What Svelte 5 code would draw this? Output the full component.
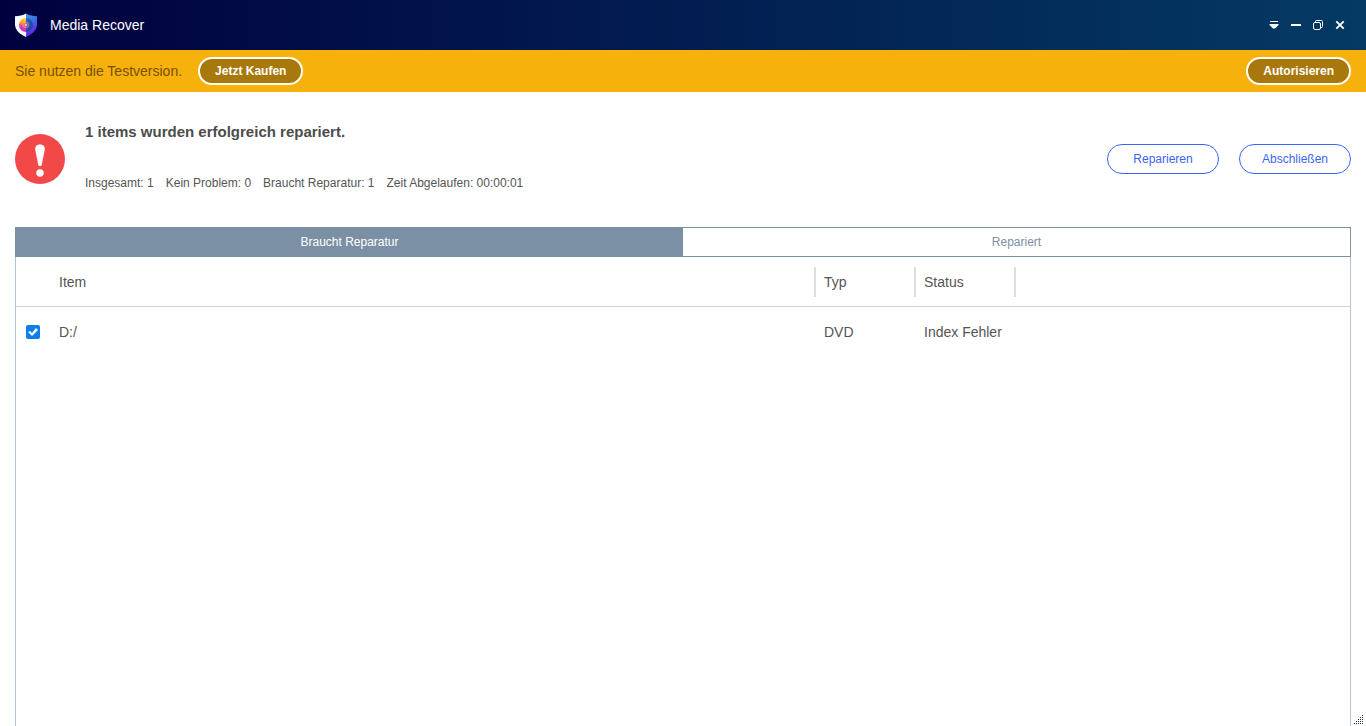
<script>
  let activeTab = $state('broken');
  let checked = $state(true);

  const tabs = [
    { id: 'broken', label: 'Braucht Reparatur' },
    { id: 'fixed', label: 'Repariert' }
  ];

  const stats = [
    { label: 'Insgesamt', value: '1' },
    { label: 'Kein Problem', value: '0' },
    { label: 'Braucht Reparatur', value: '1' },
    { label: 'Zeit Abgelaufen', value: '00:00:01' }
  ];
</script>

<div class="window">
  <header class="titlebar">
    <svg class="logo" viewBox="0 0 24 24" aria-hidden="true">
      <defs>
        <linearGradient id="shield-right" x1="0" y1="0" x2="0.3" y2="1">
          <stop offset="0" stop-color="#3c9bea" />
          <stop offset="0.55" stop-color="#3d63e6" />
          <stop offset="1" stop-color="#7417ea" />
        </linearGradient>
        <linearGradient id="disc-left" x1="0.7" y1="0" x2="0.4" y2="1">
          <stop offset="0" stop-color="#ffd21f" />
          <stop offset="0.4" stop-color="#ff9a24" />
          <stop offset="0.65" stop-color="#f0389c" />
          <stop offset="1" stop-color="#a52be8" />
        </linearGradient>
        <linearGradient id="disc-right" x1="0" y1="0" x2="1" y2="1">
          <stop offset="0" stop-color="#2c62b4" />
          <stop offset="1" stop-color="#1c3488" />
        </linearGradient>
      </defs>
      <path d="M12 0.5C9 2.400 5 3.100 1 3.200V11c0 6 4.500 10 11 13z" fill="#f4fbff" />
      <path d="M12 0.5c3 1.900 7 2.600 11 2.700V11c0 6-4.500 10-11 13z" fill="url(#shield-right)" />
      <path d="M12 5a7 7 0 0 0 0 14z" fill="url(#disc-left)" />
      <path d="M12 5a7 7 0 0 1 0 14z" fill="url(#disc-right)" opacity="0.85" />
      <circle cx="12" cy="12" r="2.800" fill="#c45cc4" fill-opacity="0.500" stroke="#d9a6dc" stroke-opacity="0.600" stroke-width="0.800" />
      <circle cx="12" cy="12" r="1" fill="#e6d4fa" />
    </svg>
    <span class="app-name">Media Recover</span>
    <div class="controls">
      <button type="button" aria-label="Menü">
        <svg viewBox="0 0 12 12"><path d="M2 2h8v1H2zM1.500 5h9v1L7 9.500H5L1.500 6z" fill="#fff" /></svg>
      </button>
      <button type="button" aria-label="Minimieren">
        <svg viewBox="0 0 12 12"><path d="M1 5h10v2H1z" fill="#fff" /></svg>
      </button>
      <button type="button" aria-label="Wiederherstellen">
        <svg viewBox="0 0 12 12" fill="none" stroke="#fff">
          <rect x="1.500" y="3.500" width="7" height="7" rx="1.500" />
          <path d="M3.500 3V2.500a1 1 0 0 1 1-1h5a1 1 0 0 1 1 1v5a1 1 0 0 1-1 1H9" />
        </svg>
      </button>
      <button type="button" aria-label="Schließen">
        <svg viewBox="0 0 12 12"><path d="M2.300 2.300l7.400 7.400M9.700 2.300L2.300 9.700" stroke="#fff" stroke-width="1.800" /></svg>
      </button>
    </div>
  </header>

  <div class="trial">
    <span>Sie nutzen die Testversion.</span>
    <button type="button">Jetzt Kaufen</button>
    <button type="button" class="authorize">Autorisieren</button>
  </div>

  <main>
    <section class="summary">
      <svg class="alert" viewBox="0 0 50 50" aria-hidden="true">
        <circle cx="25" cy="25" r="25" fill="#f24848" />
        <path d="M20.200 15.500C19.800 12.300 22 10.500 25 10.500s5.200 1.800 4.800 5L26.700 31c-.4 1.600-3 1.600-3.400 0z" fill="#fff" />
        <circle cx="25" cy="39" r="3.700" fill="#fff" />
      </svg>
      <div class="report">
        <h1>1 items wurden erfolgreich repariert.</h1>
        <div class="stats">
          {#each stats as stat}
            <span>{stat.label}: {stat.value}</span>
          {/each}
        </div>
      </div>
      <div class="actions">
        <button type="button">Reparieren</button>
        <button type="button">Abschließen</button>
      </div>
    </section>

    <div class="tabs" role="tablist">
      {#each tabs as tab}
        <button
          type="button"
          role="tab"
          class:active={activeTab === tab.id}
          aria-selected={activeTab === tab.id}
          onclick={() => (activeTab = tab.id)}>{tab.label}</button>
      {/each}
    </div>

    <div class="list">
      <table>
        <colgroup>
          <col class="c-check" />
          <col class="c-item" />
          <col class="c-small" />
          <col class="c-small" />
          <col class="c-rest" />
        </colgroup>
        <thead>
          <tr>
            <td></td>
            <th scope="col"><span>Item</span></th>
            <th scope="col"><span>Typ</span></th>
            <th scope="col"><span>Status</span></th>
            <td></td>
          </tr>
        </thead>
        <tbody>
          <tr>
            <td class="check"><input type="checkbox" id="row-d" bind:checked /></td>
            <td><label for="row-d">D:/</label></td>
            <td>DVD</td>
            <td>Index Fehler</td>
            <td></td>
          </tr>
        </tbody>
      </table>
    </div>
  </main>

  <svg class="grip" viewBox="0 0 10 10" aria-hidden="true">
    <path
      d="M8 0h1v1H8zM6 2h1v1H6zM8 2h1v1H8zM4 4h1v1H4zM6 4h1v1H6zM8 4h1v1H8zM2 6h1v1H2zM4 6h1v1H4zM6 6h1v1H6zM8 6h1v1H8zM0 8h1v1H0zM2 8h1v1H2zM4 8h1v1H4zM6 8h1v1H6zM8 8h1v1H8z"
      fill="#1c2c4c" />
  </svg>
</div>

<style>
  :global(body) {
    margin: 0;
    background: #fff;
  }

  .window {
    position: relative;
    display: flex;
    flex-direction: column;
    min-height: 100vh;
    box-sizing: border-box;
    font-family: 'Liberation Sans', Arial, sans-serif;
    font-size: 14px;
    line-height: 20px;
    color: #555;
  }

  button {
    box-sizing: border-box;
    margin: 0;
    padding: 0;
    font: inherit;
    cursor: pointer;
  }

  .titlebar {
    display: flex;
    align-items: center;
    height: 50px;
    padding: 0 20px 0 14px;
    background: linear-gradient(90deg, #00003f, #043a63);
    color: #fff;
  }

  .logo {
    width: 24px;
    height: 24px;
    margin-right: 12px;
  }

  .controls {
    display: flex;
    gap: 10px;
    margin-left: auto;
  }

  .controls button {
    display: flex;
    border: 0;
    background: none;
  }

  .controls svg {
    width: 12px;
    height: 12px;
  }

  .trial {
    display: flex;
    align-items: center;
    gap: 16px;
    height: 42px;
    padding: 0 15px;
    background: #f7b10c;
    color: #765000;
  }

  .trial button {
    height: 28px;
    padding: 0 15px;
    border: 2px solid #fff;
    border-radius: 14px;
    background: #a9780c;
    color: #fff;
    font-size: 12px;
    font-weight: bold;
  }

  .trial .authorize {
    margin-left: auto;
  }

  main {
    display: flex;
    flex: 1;
    flex-direction: column;
    padding: 0 15px;
  }

  .summary {
    display: flex;
    align-items: flex-start;
    padding: 30px 0 34px;
  }

  .alert {
    width: 50px;
    height: 50px;
    margin: 12px 20px 0 0;
  }

  .report {
    display: flex;
    flex-direction: column;
    gap: 31px;
  }

  h1 {
    margin: 0;
    font-size: 15px;
    line-height: 20px;
    color: #4c4c4c;
  }

  .stats {
    display: flex;
    gap: 12px;
    font-size: 12px;
    line-height: 20px;
  }

  .actions {
    display: flex;
    gap: 20px;
    margin: 22px 0 0 auto;
  }

  .actions button {
    width: 112px;
    height: 30px;
    border: 1px solid #3c64f4;
    border-radius: 15px;
    background: #fff;
    color: #3c64f4;
    font-size: 12px;
  }

  .tabs {
    display: flex;
    border: 1px solid #7b8fa5;
  }

  .tabs button {
    flex: 1;
    height: 28px;
    border: 0;
    background: #fff;
    color: #7b8fa5;
    font-size: 12px;
  }

  .tabs .active {
    background: #7b8fa5;
    color: #fff;
  }

  .list {
    flex: 1;
    border: solid #b0c4d6;
    border-width: 0 1px;
  }

  table {
    width: 100%;
    table-layout: fixed;
    border-spacing: 0;
  }

  .c-check {
    width: 35px;
  }

  .c-item {
    width: 765px;
  }

  .c-small {
    width: 100px;
  }

  .c-rest {
    width: auto;
  }

  th,
  td {
    box-sizing: border-box;
    height: 50px;
    padding: 0;
    text-align: left;
    font-weight: normal;
  }

  tbody td {
    padding-left: 8px;
  }

  thead th,
  thead td {
    border-bottom: 1px solid #d2d2d2;
  }

  th span {
    display: block;
    padding: 5px 8px;
    border-right: 2px solid #ddd;
  }

  .check input {
    appearance: none;
    display: block;
    width: 14px;
    height: 14px;
    margin: 0 0 0 2px;
    border-radius: 2px;
    background: #fff;
    box-shadow: inset 0 0 0 1px #767676;
  }

  .check input:checked {
    background: #0d7eea;
    box-shadow: none;
  }

  .check input:checked::before {
    content: '';
    display: block;
    height: 14px;
    background: #fff;
    clip-path: polygon(2px 7px, 4px 6px, 6px 8px, 10px 3px, 12px 5px, 6px 11px);
  }

  .grip {
    position: absolute;
    right: 2px;
    bottom: 1px;
    width: 10px;
    height: 10px;
  }
</style>
